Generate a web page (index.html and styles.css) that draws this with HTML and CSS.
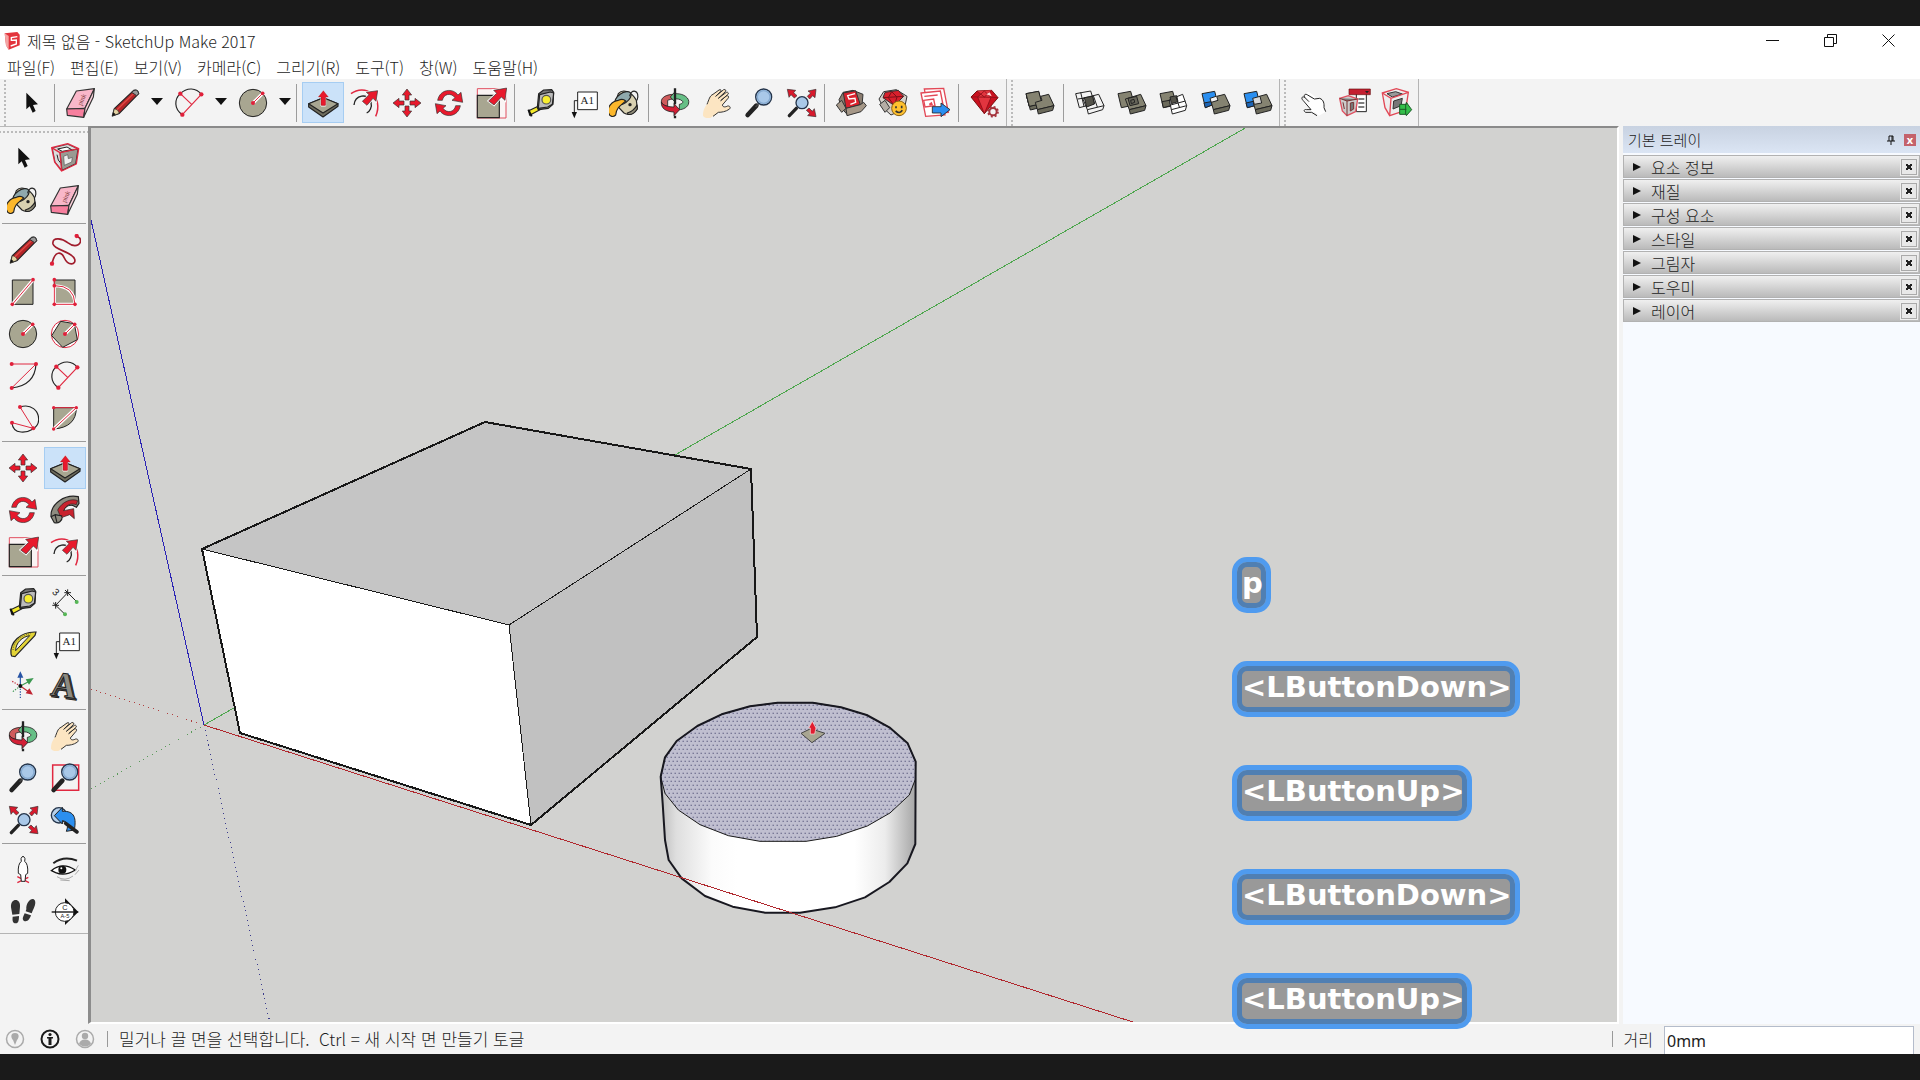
FILE: index.html
```html
<!DOCTYPE html>
<html lang="ko">
<head>
<meta charset="utf-8">
<title>제목 없음 - SketchUp Make 2017</title>
<link rel="stylesheet" href="styles.css">
</head>
<body>
<svg class="sprite" aria-hidden="true">
  <symbol id="select" viewBox="-48 -48 96 96"><path d="M-14-31 21 4 6 6 14 24 5 29-4 10-14 19z" fill="#111"/></symbol>
  <symbol id="component" viewBox="-48 -48 96 96"><g stroke-linejoin="round"><path d="M-38-30 8-41 39-27 32 17-9 37-30 12z" fill="#ddd" stroke="#555" stroke-width="3"/><path d="M-15-17 39-27 32 17-9 37z" fill="#9a9a92" stroke="#333" stroke-width="3"/><path d="M-22-27 6-33 20-25-8-20zM-24-10-20 6-13 15" fill="#fff" stroke="#222" stroke-width="3"/><path d="M-4-5 8-10 10 2 22-2 20 12-2 22z" fill="#eee" stroke="#555" stroke-width="2"/><path d="M-40-31 8-43 41-28 34 18-10 39-31 12zM-40-31-15-16 41-28M-15-16-10 39" fill="none" stroke="#e02840" stroke-width="4"/></g></symbol>
  <symbol id="paint" viewBox="-48 -48 96 96"><g stroke="#222" stroke-width="3.500" stroke-linejoin="round"><path d="M-20-28C-8-42 18-38 34-8L37 16C26 34 10 38-3 30L-30 2z" fill="#d8d0b0"/><path d="M7 30C20 26 30 18 36 6L37 18C28 32 18 36 9 34z" fill="#8f8b78"/><ellipse cx="-6" cy="-14" rx="28" ry="15" transform="rotate(-35 -6 -14)" fill="#8fa9ad"/><path d="M14-20C16-44 48-40 36-8" fill="none"/><path d="M-20-8C-40-6-54 14-50 28-46 44-34 42-28 36-26 14-14 8 2-6-4-12-12-12-20-8z" fill="#fcb72b"/></g><circle cx="15" cy="5" r="5" fill="#222"/></symbol>
  <symbol id="eraser" viewBox="-48 -48 96 96"><g stroke="#333" stroke-width="3.500" stroke-linejoin="round"><path d="M-43 18-14-36 40-43 12 16z" fill="#f9b7c9"/><path d="M-43 18 12 16 8 43-41 37z" fill="#f77f9e"/><path d="M12 16 40-43 37-18 8 43z" fill="#fbd1db"/></g><text x="10" y="5" transform="rotate(-65)" text-anchor="middle" font-family="Liberation Serif,serif" font-size="20" fill="#733">pink</text></symbol>
  <symbol id="pencil" viewBox="-48 -48 96 96"><path d="M-38 39-32 17 26-38Q38-42 41-28L-17 31z" fill="#b32427" stroke="#222" stroke-width="3.500" stroke-linejoin="round"/><path d="M-38 39-32 17Q-20 18-17 31z" fill="#e3d2a2" stroke="#222" stroke-width="2"/><path d="M-38 39-35 28-28 34z" fill="#111"/><path d="M-24 20 30-32" stroke="#e04a45" stroke-width="4"/><path d="M24-36Q38-44 41-28L35-22 20-32z" fill="#999" stroke="#333" stroke-width="3"/></symbol>
  <symbol id="freehand" viewBox="-48 -48 96 96"><path d="M-39 42C-30-2-10 6-2 24 10 50 34 44 29 28 22 4-30 2-36-18-40-42-6-34 8-22 34-2 54-20 44-36L35-42" fill="none" stroke="#a01c2c" stroke-width="5"/><circle cx="-39" cy="41" r="6.500" fill="#e0203a"/><circle cx="35" cy="-42" r="6.500" fill="#e0203a"/></symbol>
  <symbol id="rectangle" viewBox="-48 -48 96 96"><path d="M-32-36H30V37H-32z" fill="#a8a691" stroke="#222" stroke-width="3"/><path d="M-32 37 30-36" stroke="#fff" stroke-width="10"/><path d="M-32 37 30-36" stroke="#e02840" stroke-width="3"/><g fill="#e0203a"><circle cx="-32" cy="37" r="5.500"/><circle cx="30" cy="-37" r="5.500"/></g></symbol>
  <symbol id="rotrect" viewBox="-48 -48 96 96"><path d="M-32-36H30V37H-32z" fill="#a8a691" stroke="#222" stroke-width="3"/><path d="M-32-19Q28-18 30 37H-32z" fill="none" stroke="#fff" stroke-width="9"/><path d="M-32-37V37H30Q28-20-32-19" fill="none" stroke="#e02840" stroke-width="3"/><g fill="#e0203a"><circle cx="-32" cy="-37" r="5.500"/><circle cx="-32" cy="-19" r="5.500"/><circle cx="-32" cy="37" r="5.500"/><circle cx="30" cy="37" r="5.500"/></g></symbol>
  <symbol id="circle" viewBox="-48 -48 96 96"><circle r="41" fill="#a8a691" stroke="#222" stroke-width="3"/><path d="M0 0 29-29" stroke="#fff" stroke-width="10"/><path d="M0 0 29-29" stroke="#e02840" stroke-width="3"/><circle r="6" fill="#e0203a"/><circle cx="29" cy="-29" r="5.500" fill="#e0203a"/></symbol>
  <symbol id="polygon" viewBox="-48 -48 96 96"><circle r="41" fill="#fff" stroke="#e02840" stroke-width="3"/><path d="M-13-38 28-31 37 17-7 40-40 5z" fill="#a8a691" stroke="#222" stroke-width="3"/><path d="M0 0 29-29" stroke="#fff" stroke-width="10"/><path d="M0 0 29-29" stroke="#e02840" stroke-width="3"/><circle r="6" fill="#e0203a"/><circle cx="29" cy="-29" r="5.500" fill="#e0203a"/></symbol>
  <symbol id="arc1" viewBox="-48 -48 96 96"><path d="M39-36Q36 28-34 36" fill="none" stroke="#222" stroke-width="3.500"/><path d="M-34 36 39-36H-34" fill="none" stroke="#e02840" stroke-width="3"/><g fill="#e0203a"><circle cx="-34" cy="36" r="6"/><circle cx="39" cy="-36" r="6"/><circle cx="-34" cy="-36" r="6"/></g></symbol>
  <symbol id="arc2" viewBox="-48 -48 96 96"><path d="M-20 35C-46 18-44-12-26-28-6-48 22-46 37-26" fill="none" stroke="#222" stroke-width="3.500"/><path d="M-20 35 37-26M-26-28 8 4" stroke="#e02840" stroke-width="3.500"/><g fill="#e0203a"><circle cx="-20" cy="35" r="6.500"/><circle cx="37" cy="-26" r="6.500"/><circle cx="-26" cy="-28" r="6.500"/></g></symbol>
  <symbol id="arc3" viewBox="-48 -48 96 96"><path d="M-9-33C24-44 48-22 47 6 46 30 18 44-6 42-24 40-32 28-33 14" fill="none" stroke="#222" stroke-width="3.500"/><path d="M-9-33 31 31-33 14" fill="none" stroke="#e02840" stroke-width="3"/><g fill="#e0203a"><circle cx="-9" cy="-33" r="6"/><circle cx="31" cy="31" r="6"/><circle cx="-33" cy="14" r="6"/></g></symbol>
  <symbol id="pie" viewBox="-48 -48 96 96"><path d="M-34-31H34Q34 28-34 33z" fill="#a8a691" stroke="#222" stroke-width="3"/><path d="M-34 33 34-31" stroke="#fff" stroke-width="10"/><path d="M-34 33 34-31H-34" fill="none" stroke="#e02840" stroke-width="3"/><g fill="#e0203a"><circle cx="-34" cy="33" r="5"/><circle cx="34" cy="-31" r="5"/><circle cx="-34" cy="-31" r="5"/></g></symbol>
  <symbol id="move" viewBox="-48 -48 96 96"><g stroke="#333" stroke-width="2" fill="#e8192c"><path d="M0-42 14-24H6V-9H-6V-24H-14z"/><path d="M0-42 14-24H6V-9H-6V-24H-14z" transform="rotate(90)"/><path d="M0-42 14-24H6V-9H-6V-24H-14z" transform="rotate(180)"/><path d="M0-42 14-24H6V-9H-6V-24H-14z" transform="rotate(270)"/></g></symbol>
  <symbol id="push" viewBox="-48 -48 96 96"><g stroke="#222" stroke-width="3.500" stroke-linejoin="round"><path d="M-43 2 1-16 45 2 45 10 0 42-43 12z" fill="#6f6d5e"/><path d="M-43 2 1-16 45 2 0 30z" fill="#a8a691"/></g><path d="M1-37 16-18H8V9H-6V-18H-14z" fill="#e8192c" stroke="#fff" stroke-width="3"/><path d="M1-37 16-18H8V7H-6V-18H-14z" fill="#e8192c" stroke="#722" stroke-width="1"/></symbol>
  <symbol id="rotate" viewBox="-48 -48 96 96"><g fill="#e8192c" stroke="#333" stroke-width="2"><path d="M-34-8C-28-42 12-46 27-24L36-32 41-2 9-8 18-16C6-32-16-28-20-8z"/><path d="M-34-8C-28-42 12-46 27-24L36-32 41-2 9-8 18-16C6-32-16-28-20-8z" transform="rotate(180)"/></g></symbol>
  <symbol id="follow" viewBox="-48 -48 96 96"><g stroke="#222" stroke-width="3.500" stroke-linejoin="round"><path d="M-42 20C-44-20 0-48 40-40L42-20 34-8 22-14C4-16-8-2-8 18-8 34-20 42-32 38z" fill="#8e8c80"/><path d="M-22 0C-8-26 20-36 38-28L34-16C16-22 2-14-4 2L26-4 28 26 14 14-8 22-16 14z" fill="#c9232e" stroke-width="2"/><path d="M-42 20-30 14-8 18M-30 14-24 38" fill="none"/></g></symbol>
  <symbol id="scale" viewBox="-48 -48 96 96"><path d="M-41-43H45V45H-41z" fill="#faf4f4" stroke="#e05060" stroke-width="3"/><path d="M-41-23H25V44H-41z" fill="#a8a691" stroke="#222" stroke-width="3.500"/><path d="M47-45 42-8 31-18 9 6-7-6 17-29 8-38z" fill="#e8192c" stroke="#fff" stroke-width="7"/><path d="M47-45 42-8 31-18 9 6-7-6 17-29 8-38z" fill="#e8192c" stroke="#333" stroke-width="2"/></symbol>
  <symbol id="offset" viewBox="-48 -48 96 96"><path d="M-42-28C0-60 58-20 32 40" fill="none" stroke="#e02840" stroke-width="4.500"/><path d="M-33 6C-30-24 8-32 18-2 22 12 14 26 5 30" fill="none" stroke="#222" stroke-width="4"/><path d="M38-37 33-5 24-14 6 7-8-5 12-25 4-32z" fill="#e8192c" stroke="#fff" stroke-width="6"/><path d="M38-37 33-5 24-14 6 7-8-5 12-25 4-32z" fill="#e8192c" stroke="#333" stroke-width="2"/></symbol>
  <symbol id="tape" viewBox="-48 -48 96 96"><g stroke="#222" stroke-width="3.500" stroke-linejoin="round"><path d="M-37 23 4 4 8 14-34 37z" fill="#f4ea28"/><path d="M-7-28 8-39 32-40 38-32 36 4 22 16-8 20-11 14z" fill="#777"/><path d="M-4-25 28-33 38-30 34 4 20 12-8 16z" fill="#bbb"/><circle cx="16" cy="-10" r="13" fill="#f8ee30" stroke="#555"/></g><path d="M-38 20-28 40" stroke="#111" stroke-width="6"/></symbol>
  <symbol id="dimension" viewBox="-48 -48 96 96"><g stroke="#222" stroke-width="3"><path d="M-28 10 8-28M-36 2 0 37M0-36 36 0M-28 0V20M-38 10H-18M8-38V-18M-2-28H18"/></g><g fill="#57b757"><circle cx="0" cy="37" r="6"/><circle cx="35" cy="0" r="6"/></g><text x="-36" y="-20" transform="rotate(42 -28 -30)" font-family="Liberation Sans,sans-serif" font-size="30" fill="#222">3</text></symbol>
  <symbol id="protractor" viewBox="-48 -48 96 96"><path d="M-36 30C-40-4-8-38 39-36L36-26-24 38-34 36z" fill="#e2d336" stroke="#222" stroke-width="3.500"/><path d="M-22 20C-22-4-2-22 20-25z" fill="#f3f3f3" stroke="#222" stroke-width="3"/><path d="M-30 18C-28-8-4-28 24-31" fill="none" stroke="#554" stroke-width="3" stroke-dasharray="3 4"/></symbol>
  <symbol id="label" viewBox="-48 -48 96 96"><path d="M-16-33H43V20H-16z" fill="#fff" stroke="#222" stroke-width="3"/><path d="M-16-7H-26V34" fill="none" stroke="#222" stroke-width="3"/><path d="M-34 27H-18L-26 46z" fill="#111"/><text x="13" y="4" text-anchor="middle" font-family="Liberation Serif,serif" font-size="33" fill="#222">A1</text></symbol>
  <symbol id="axes" viewBox="-48 -48 96 96"><g stroke-width="3.500"><path d="M-8 0V-30" stroke="#2754a5"/><path d="M-8 0 22-16" stroke="#3b9850"/><path d="M-8 0 18 18" stroke="#c02432"/><path d="M-8 0V36" stroke="#2754a5" stroke-dasharray="4 4"/><path d="M-8 0-32 18" stroke="#3b9850" stroke-dasharray="4 4"/><path d="M-8 0-36-16" stroke="#c02432" stroke-dasharray="4 4"/></g><path d="M-8-44-17-25H1z" fill="#2754a5"/><path d="M32-24 18-4 8-20z" fill="#3b9850"/><path d="M30 26 8 22 19 7z" fill="#c02432"/><circle cx="-8" r="6" fill="#111"/></symbol>
  <symbol id="text3d" viewBox="-48 -48 96 96"><g font-family="Liberation Serif,serif" font-size="106" font-weight="700" text-anchor="middle" transform="rotate(8)" stroke="#222" stroke-width="3"><text x="2" y="38" fill="#555">A</text><text x="-3" y="33" fill="#8c8b82">A</text></g></symbol>
  <symbol id="orbit" viewBox="-48 -48 96 96"><g stroke="#222" stroke-width="2.500" stroke-linejoin="round"><path d="M-3-26C-24-26-42-18-41-3-38 6-30 8-22 10V-8C-18-10-10-12-3-12z" fill="#cf5b5c"/><path d="M4-28C28-28 44-14 41 0 40 12 24 20 13 20V4C22 2 26-2 22-6 14-12 8-13 0-12L2-1-14-18 0-34z" fill="#66bf86"/><path d="M-41-3C-38 8-18 12-3 12V2L14 20-3 38V27C-28 26-42 16-41-3z" fill="#d21f35"/></g><path d="M0-44V4M0 38V46" stroke="#222" stroke-width="7"/></symbol>
  <symbol id="pan" viewBox="-48 -48 96 96"><g transform="translate(-4)"><path d="M-38 38C-38 20-32 12-26 4-20-10-18-22-8-26L10-39C16-42 18-38 14-34L0-20 24-40C30-42 32-37 29-34L8-14 32-32C38-34 40-28 36-25L15-7 32-21C38-24 41-18 37-14L20 6C22 14 30 12 36 9 44 8 46 16 40 19 30 26 18 28 8 28 0 36-10 40-14 44-24 46-34 46-38 38z" fill="#fce5c2"/><path d="M-26 4C-20-10-18-22-8-26L10-39C16-42 18-38 14-34L0-20 24-40C30-42 32-37 29-34L8-14 32-32C38-34 40-28 36-25L15-7 32-21C38-24 41-18 37-14L20 6C22 14 30 12 36 9 44 8 46 16 40 19 30 26 18 28 8 28L-8 40" fill="none" stroke="#333" stroke-width="3"/></g></symbol>
  <symbol id="zoom" viewBox="-48 -48 96 96"><path d="M-34 36-8 8" stroke="#222" stroke-width="14" stroke-linecap="round"/><path d="M-10 12 0 0" stroke="#444" stroke-width="5"/><circle cx="14" cy="-18" r="24" fill="#a9c8e8" stroke="#24344a" stroke-width="4"/><circle cx="14" cy="-18" r="19" fill="none" stroke="#86aad0" stroke-width="4"/></symbol>
  <symbol id="zoomwin" viewBox="-48 -48 96 96"><path d="M-37-39H41V37H-37z" fill="none" stroke="#e02840" stroke-width="4.500"/><path d="M-34 36-8 8" stroke="#222" stroke-width="14" stroke-linecap="round"/><circle cx="14" cy="-18" r="24" fill="#a9c8e8" stroke="#24344a" stroke-width="4"/><circle cx="14" cy="-18" r="19" fill="none" stroke="#86aad0" stroke-width="4"/></symbol>
  <symbol id="extents" viewBox="-48 -48 96 96"><path d="M-35 38-14 16" stroke="#222" stroke-width="10" stroke-linecap="round"/><circle cx="3" cy="-1" r="18" fill="#a9c8e8" stroke="#24344a" stroke-width="4"/><g fill="#d8192c" stroke="#333" stroke-width="2"><path d="M-41-41-16-38-22-31-12-22-20-15-30-25-36-17z"/><path d="M-41-41-16-38-22-31-12-22-20-15-30-25-36-17z" transform="translate(4)rotate(90)"/><path d="M-41-41-16-38-22-31-12-22-20-15-30-25-36-17z" transform="translate(4)rotate(180)"/></g></symbol>
  <symbol id="previous" viewBox="-48 -48 96 96"><circle cx="-18" cy="-14" r="23" fill="#b6d0ea" stroke="#24344a" stroke-width="4"/><path d="M-32-13-8-38V-26C30-28 34-4 28 30L4 34C12 12 6 4-8 2V12z" fill="#2b8ff0" stroke="#222" stroke-width="3"/><path d="M2 10 36 36" stroke="#222" stroke-width="11" stroke-linecap="round"/></symbol>
  <symbol id="camera" viewBox="-48 -48 96 96"><path d="M-17 38 16 22M-17 20 18 38" stroke="#e02840" stroke-width="4"/><path d="M-6-34Q0-48 6-34L5-26Q16-18 14 10L8 14 6 34H-5L-7 14-14 10Q-16-18-5-26z" fill="#fff" stroke="#222" stroke-width="3"/></symbol>
  <symbol id="look" viewBox="-48 -48 96 96"><path d="M-35-20Q-4-44 36-28" fill="none" stroke="#222" stroke-width="6"/><path d="M-41 2Q-8-26 31 0 0 20-28 8z" fill="#fff" stroke="#111" stroke-width="4"/><circle cx="-8" cy="-1" r="12" fill="#111"/><circle cx="-11" cy="-5" r="3" fill="#fff"/><path d="M-24 20Q0 36 24 18M-14 30 14 32M30 4 40-14M30 14 42 0" stroke="#aaa" stroke-width="3" fill="none"/></symbol>
  <symbol id="walk" viewBox="-48 -48 96 96"><g fill="#333"><path d="M-36-14C-38-44-6-42-9-16L-11 6-32 8z"/><path d="M-31 14-12 12C-12 22-13 34-22 34-32 34-32 24-31 14z"/><path d="M10-8C8-32 30-48 36-34 40-22 30-8 26 4L8-2z"/><path d="M5 4 24 10C20 22 12 32 2 26-4 20 2 12 5 4z"/></g></symbol>
  <symbol id="section" viewBox="-48 -48 96 96"><path d="M0-41 40 0 0 39z" fill="#111"/><circle cx="-1" cy="0" r="28" fill="#fff" stroke="#222" stroke-width="3"/><path d="M-40 0H40" stroke="#111" stroke-width="4"/><g text-anchor="middle" font-family="Liberation Sans,sans-serif" fill="#222"><text x="0" y="-6" font-size="22">C</text><text x="0" y="19" font-size="17">A-5</text></g></symbol>
  <symbol id="warehouse" viewBox="-48 -48 96 96"><g stroke="#333" stroke-width="3" stroke-linejoin="round"><path d="M-36-10-24-32 6-38 36-26 32 18-10 36-28 16z" fill="#8b7d70"/><path d="M-23-30 14-37 28 5-15 16z" fill="#d9202c"/><path d="M-44 6-28-8-15 16-28 28zM-15 16 28 5 38-2 46 8 30 26-12 38z" fill="#a69888"/></g><path d="M12-28-10-22-6-12 12-14 14-2-2 4" fill="none" stroke="#fff" stroke-width="4"/></symbol>
  <symbol id="share" viewBox="-48 -48 96 96"><g stroke="#333" stroke-width="3" stroke-linejoin="round"><path d="M-42-12-28-34 10-40 42-20 34 18-6 36-28 16z" fill="#d6d0c9"/><path d="M-24-32 16-38 32-20 4 8-30-16z" fill="#d9202c"/><path d="M-40 4-24-8-10 14-24 28z" fill="#b5ada5"/></g><path d="M-30-16 32-20M-14-16 4 8 12-18-4-34z" fill="none" stroke="#7d1018" stroke-width="3"/><circle cx="18" cy="16" r="22" fill="#ffc12e" stroke="#8a6010" stroke-width="3"/><path d="M9 10V16M26 8V16M8 24Q20 34 28 22" fill="none" stroke="#333" stroke-width="5"/></symbol>
  <symbol id="layout" viewBox="-48 -48 96 96"><g fill="#fff" stroke="#e24856" stroke-width="4"><path d="M-32-42 26-44 40 28-18 32z"/><path d="M-42-30 16-36 30 36-28 40z"/><path d="M-32-20 8-24M-34-8-4-12 0 8-30 12z"/></g><path d="M-18 2-10-4-6 6-16 8z" fill="#e24856"/><path d="M-8 11H18V0L45 20 18 41V30H-8z" fill="#2b8ff0" stroke="#222" stroke-width="2.500"/></symbol>
  <symbol id="ruby" viewBox="-48 -48 96 96"><path d="M-42-18-24-36 20-38 39-16-2 32z" fill="#c9101e" stroke="#711" stroke-width="3"/><path d="M-24-36-2-18 20-38M-42-18-2-18 39-16M-22-18-2 32 18-17-2-36-22-18" fill="#e2353f" stroke="#8b0e18" stroke-width="2.500"/><path d="M4-26 14-32 20-20z" fill="#ffd8d8"/><circle cx="24" cy="26" r="11" fill="#f3f3f3" stroke="#a4333c" stroke-width="6"/><circle cx="24" cy="26" r="15" fill="none" stroke="#a4333c" stroke-width="5" stroke-dasharray="6 5.800"/></symbol>
  <symbol id="shell" viewBox="-48 -48 96 96"><g stroke="#222" stroke-width="3" stroke-linejoin="round"><path d="M-42-28-4-35 6 2-32 10z" fill="#858371"/><path d="M-32 10-10 5-8 16-29 21-40-20z" fill="#6b6a5b"/><path d="M-42-28-4-35 6 2-32 10z" fill="#858371"/><path d="M-14-2 6-8 2-20 26-26 42 8-8 20z" fill="#858371"/><path d="M-8 20 42 8 38 22-5 33z" fill="#6b6a5b"/></g></symbol>
  <symbol id="intersect" viewBox="-48 -48 96 96"><g fill="none" stroke="#222" stroke-width="3" stroke-linejoin="round"><path d="M-43-28 2-36 14 2-32 14zM-37-12 8-18M-22-14 26-26 42 8-8 20zM-8 20-5 33 38 20 42 8M-28-32-18 10M10-22 22 12"/><path d="M-17-16 8-20 13 3-10 12z" fill="#54534a"/></g></symbol>
  <symbol id="union" viewBox="-48 -48 96 96"><g stroke="#222" stroke-width="3" stroke-linejoin="round"><path d="M-42-28-4-35 8 6-32 14z" fill="#858371"/><path d="M-20-12 26-26 42 8-8 20z" fill="#858371"/><path d="M-8 20 42 8 38 22-5 33z" fill="#6b6a5b"/><path d="M-12-14 14-20 20 2-6 8zM-4-8 6-11 8-2-2 2z" fill="#66655a"/></g></symbol>
  <symbol id="subtract" viewBox="-48 -48 96 96"><g stroke="#222" stroke-width="3" stroke-linejoin="round"><path d="M-42-28-4-35 8 6-32 14z" fill="#858371"/><path d="M-36-4-14-8-10 8-32 14z" fill="#6b6a5b"/><path d="M-14-10 26-26 38 8-8 20zM-8 20-5 33 34 22 38 8" fill="#fff"/><path d="M-12-18 8-22 12-4-8 2z" fill="#54534a"/><path d="M6-18 16 12M-10 6 34-6" fill="none"/></g></symbol>
  <symbol id="trim" viewBox="-48 -48 96 96"><g stroke="#222" stroke-width="3" stroke-linejoin="round"><path d="M-42-28-4-35 0-20-18-14-12 6-32 14z" fill="#2b8ff0"/><path d="M-36 0-15-4-12 6-32 14z" fill="#1c64b5"/><path d="M-14-2 6-8 2-20 26-26 42 8-8 20z" fill="#858371"/><path d="M-8 20 42 8 38 22-5 33z" fill="#6b6a5b"/></g></symbol>
  <symbol id="split" viewBox="-48 -48 96 96"><g stroke="#222" stroke-width="3" stroke-linejoin="round"><path d="M-42-28-4-35 6 4-32 14z" fill="#2b8ff0"/><path d="M-36 0-14-5-10 8-32 14z" fill="#1c64b5"/><path d="M-14 0 4-20 26-26 42 8-8 20z" fill="#858371"/><path d="M-8 20 42 8 38 22-5 33z" fill="#6b6a5b"/><path d="M-16-14 6-20 11 0-11 4z" fill="#d9d9d9"/></g></symbol>
  <symbol id="interact" viewBox="-48 -48 96 96"><path d="M-22-18C-26-26-18-28-12-22L2-8-18-28C-20-34-12-34-8-30L14-12 20-14C32-10 34 2 33 14L38 26 18 38 6 28-20 28C-28 26-28 20-20 20L-6 20-28-2C-34-8-28-12-22-6L-10 4z" fill="#fff"/><path d="M-22 28C-30 24-26 18-20 20L-6 20-30-8C-38-16-30-22-24-16L-12-4M-24-16C-30-26-22-28-16-24L4-12 20-14C32-10 34 2 33 14L38 26M-22 28-4 28 12 38" fill="none" stroke="#222" stroke-width="3" stroke-linejoin="round"/></symbol>
  <symbol id="options" viewBox="-48 -48 96 96"><path d="M4-34H34V26H4z" fill="#fff" stroke="#222" stroke-width="3"/><path d="M10-12H28M10 0H28M10 12H28" stroke="#555" stroke-width="4"/><path d="M-18-42H46V-25H-18z" fill="#c41f30" stroke="#611" stroke-width="2"/><path d="M30-36H42L36-29z" fill="#222"/><path d="M-46-14-20-22 8-12 2 26-24 38-38 24z" fill="#ccc" stroke="#e05060" stroke-width="4"/><path d="M-46-14-24-6 8-12M-24-6V38M-36-2-32 18M-14 0V24L-4 18V-2z" fill="#777" stroke="#733" stroke-width="3"/></symbol>
  <symbol id="attributes" viewBox="-48 -48 96 96"><path d="M-44-30-2-43 34-32 26 22-22 38-36 14z" fill="#eee" stroke="#e24856" stroke-width="4"/><path d="M-30-28-4-34 16-27-14-18z" fill="#999" stroke="#333" stroke-width="3"/><path d="M-44-30-18-14 34-32M-18-14-22 38" fill="none" stroke="#e24856" stroke-width="4"/><path d="M-10-6 16-14 12 8-12 18z" fill="#777" stroke="#333" stroke-width="3"/><path d="M8 4H28V-2L44 20 28 38V34H8z" fill="#34bf4a" stroke="#1b5c27" stroke-width="3"/><path d="M8 19H28M26 2V34" stroke="#1b5c27" stroke-width="3"/></symbol>
</svg>

<div class="window">
  <header class="titlebar">
    <svg class="logo" viewBox="0 0 48 54"><path d="M2 4 40 0 47 8V40L14 53 6 40z" fill="#e3343c"/><path d="M2 4 14 12V53L6 40z" fill="#f3a5a4"/><path d="M40 14 22 17V25L37 24V36L20 42" fill="none" stroke="#fff" stroke-width="4"/></svg>
    <h1>제목 없음 - SketchUp Make 2017</h1>
    <div class="winbtns">
      <button aria-label="최소화"><svg viewBox="0 0 13 13"><path d="M0 6.500H13"/></svg></button>
      <button aria-label="이전 크기로"><svg viewBox="0 0 13 13"><path d="M.5 3.500H9.500V12.500H.5zM3.500 3.500V.5H12.500V9.500H9.500"/></svg></button>
      <button aria-label="닫기"><svg viewBox="0 0 13 13"><path d="M.5.5 12.500 12.500M12.500.5.5 12.500"/></svg></button>
    </div>
  </header>
  <nav class="menubar">
    <button>파일(F)</button><button>편집(E)</button><button>보기(V)</button><button>카메라(C)</button><button>그리기(R)</button><button>도구(T)</button><button>창(W)</button><button>도움말(H)</button>
  </nav>
  <div class="toolbars">
    <div class="bar" role="toolbar" aria-label="시작하기">
      <button class="tool" aria-label="선택"><svg><use href="#select"/></svg></button>
      <span class="vsep"></span>
      <button class="tool" aria-label="지우개"><svg><use href="#eraser"/></svg></button>
      <button class="tool wide" aria-label="선"><svg><use href="#pencil"/></svg></button><button class="drop" aria-label="선 도구 목록"></button>
      <button class="tool wide" aria-label="호"><svg><use href="#arc2"/></svg></button><button class="drop" aria-label="호 도구 목록"></button>
      <button class="tool wide" aria-label="원"><svg><use href="#circle"/></svg></button><button class="drop" aria-label="도형 도구 목록"></button>
      <span class="vsep"></span>
      <button class="tool active" aria-label="밀기/끌기"><svg><use href="#push"/></svg></button>
      <button class="tool" aria-label="오프셋"><svg><use href="#offset"/></svg></button>
      <button class="tool" aria-label="이동"><svg><use href="#move"/></svg></button>
      <button class="tool" aria-label="회전"><svg><use href="#rotate"/></svg></button>
      <button class="tool" aria-label="배율"><svg><use href="#scale"/></svg></button>
      <span class="vsep"></span>
      <button class="tool" aria-label="줄자"><svg><use href="#tape"/></svg></button>
      <button class="tool" aria-label="텍스트"><svg><use href="#label"/></svg></button>
      <button class="tool" aria-label="페인트통"><svg><use href="#paint"/></svg></button>
      <span class="vsep"></span>
      <button class="tool" aria-label="궤도"><svg><use href="#orbit"/></svg></button>
      <button class="tool" aria-label="이동 보기"><svg><use href="#pan"/></svg></button>
      <button class="tool" aria-label="확대/축소"><svg><use href="#zoom"/></svg></button>
      <button class="tool" aria-label="범위 확대/축소"><svg><use href="#extents"/></svg></button>
      <span class="vsep"></span>
      <button class="tool" aria-label="3D Warehouse"><svg><use href="#warehouse"/></svg></button>
      <button class="tool" aria-label="모델 공유"><svg><use href="#share"/></svg></button>
      <button class="tool" aria-label="LayOut으로 보내기"><svg><use href="#layout"/></svg></button>
      <span class="vsep"></span>
      <button class="tool" aria-label="확장 프로그램"><svg><use href="#ruby"/></svg></button>
    </div>
    <div class="bar" role="toolbar" aria-label="솔리드 도구">
      <button class="tool" aria-label="외부 셸"><svg><use href="#shell"/></svg></button>
      <span class="vsep"></span>
      <button class="tool" aria-label="교차"><svg><use href="#intersect"/></svg></button>
      <button class="tool" aria-label="결합"><svg><use href="#union"/></svg></button>
      <button class="tool" aria-label="빼기"><svg><use href="#subtract"/></svg></button>
      <button class="tool" aria-label="트림"><svg><use href="#trim"/></svg></button>
      <button class="tool" aria-label="분할"><svg><use href="#split"/></svg></button>
    </div>
    <div class="bar" role="toolbar" aria-label="동적 구성 요소">
      <button class="tool" aria-label="상호 작용"><svg><use href="#interact"/></svg></button>
      <button class="tool" aria-label="구성 요소 옵션"><svg><use href="#options"/></svg></button>
      <button class="tool" aria-label="구성 요소 속성"><svg><use href="#attributes"/></svg></button>
    </div>
  </div>

  <main class="work">
    <aside class="side">
      <div class="palette" role="toolbar" aria-label="큰 도구 세트">
        <div class="set">
          <button class="tool" aria-label="선택"><svg><use href="#select"/></svg></button>
          <button class="tool" aria-label="구성 요소 만들기"><svg><use href="#component"/></svg></button>
          <button class="tool" aria-label="페인트통"><svg><use href="#paint"/></svg></button>
          <button class="tool" aria-label="지우개"><svg><use href="#eraser"/></svg></button>
        </div>
        <div class="set">
          <button class="tool" aria-label="선"><svg><use href="#pencil"/></svg></button>
          <button class="tool" aria-label="자유곡선"><svg><use href="#freehand"/></svg></button>
          <button class="tool" aria-label="직사각형"><svg><use href="#rectangle"/></svg></button>
          <button class="tool" aria-label="회전된 직사각형"><svg><use href="#rotrect"/></svg></button>
          <button class="tool" aria-label="원"><svg><use href="#circle"/></svg></button>
          <button class="tool" aria-label="다각형"><svg><use href="#polygon"/></svg></button>
          <button class="tool" aria-label="호"><svg><use href="#arc1"/></svg></button>
          <button class="tool" aria-label="2점 호"><svg><use href="#arc2"/></svg></button>
          <button class="tool" aria-label="3점 호"><svg><use href="#arc3"/></svg></button>
          <button class="tool" aria-label="파이"><svg><use href="#pie"/></svg></button>
        </div>
        <div class="set">
          <button class="tool" aria-label="이동"><svg><use href="#move"/></svg></button>
          <button class="tool active" aria-label="밀기/끌기"><svg><use href="#push"/></svg></button>
          <button class="tool" aria-label="회전"><svg><use href="#rotate"/></svg></button>
          <button class="tool" aria-label="따라가기"><svg><use href="#follow"/></svg></button>
          <button class="tool" aria-label="배율"><svg><use href="#scale"/></svg></button>
          <button class="tool" aria-label="오프셋"><svg><use href="#offset"/></svg></button>
        </div>
        <div class="set">
          <button class="tool" aria-label="줄자"><svg><use href="#tape"/></svg></button>
          <button class="tool" aria-label="치수"><svg><use href="#dimension"/></svg></button>
          <button class="tool" aria-label="각도기"><svg><use href="#protractor"/></svg></button>
          <button class="tool" aria-label="텍스트"><svg><use href="#label"/></svg></button>
          <button class="tool" aria-label="축"><svg><use href="#axes"/></svg></button>
          <button class="tool" aria-label="3D 텍스트"><svg><use href="#text3d"/></svg></button>
        </div>
        <div class="set">
          <button class="tool" aria-label="궤도"><svg><use href="#orbit"/></svg></button>
          <button class="tool" aria-label="이동 보기"><svg><use href="#pan"/></svg></button>
          <button class="tool" aria-label="확대/축소"><svg><use href="#zoom"/></svg></button>
          <button class="tool" aria-label="창 확대/축소"><svg><use href="#zoomwin"/></svg></button>
          <button class="tool" aria-label="범위 확대/축소"><svg><use href="#extents"/></svg></button>
          <button class="tool" aria-label="이전"><svg><use href="#previous"/></svg></button>
        </div>
        <div class="set">
          <button class="tool" aria-label="카메라 배치"><svg><use href="#camera"/></svg></button>
          <button class="tool" aria-label="둘러보기"><svg><use href="#look"/></svg></button>
          <button class="tool" aria-label="걷기"><svg><use href="#walk"/></svg></button>
          <button class="tool" aria-label="단면"><svg><use href="#section"/></svg></button>
        </div>
      </div>
    </aside>

    <section class="viewport" aria-label="모델">
      <svg class="scene" viewBox="91 128 1526 895" preserveAspectRatio="xMinYMin slice">
        <defs>
          <linearGradient id="wall"><stop offset="0" stop-color="#bdbdbd"/><stop offset=".06" stop-color="#dedede"/><stop offset=".2" stop-color="#fbfbfb"/><stop offset=".3" stop-color="#fff"/><stop offset=".76" stop-color="#fff"/><stop offset=".88" stop-color="#ececec"/><stop offset="1" stop-color="#a6a6a6"/></linearGradient>
          <pattern id="dots" width="12" height="24" patternUnits="userSpaceOnUse"><path d="M0 0H12V24H0z" fill="#c0bfd0"/><path d="M2 2H5V5H2zM8 14H11V17H8z" fill="#33335f"/></pattern>
        </defs>
        <g fill="none" stroke-width="1" shape-rendering="crispEdges">
          <path d="M204 725 1247 127" stroke="#4da64d"/>
          <path d="M91 220 204 725" stroke="#2a22b4"/>
          <path d="M91 689 204 725" stroke="#b04040" stroke-dasharray="1 4"/>
          <path d="M91 789 204 725" stroke="#5a9a5a" stroke-dasharray="1 4"/>
          <path d="M204 725 270 1023" stroke="#3a3a8c" stroke-dasharray="1 4"/>
        </g>
        <path d="M202 549 485 422 751 469 509 625z" fill="#c5c5c5"/>
        <path d="M509 625 751 469 757 637 531 825z" fill="#c1c1c1"/>
        <path d="M202 549 509 625 531 825 240 733z" fill="#fff"/>
        <path d="M202 549 509 625 751 469M509 625 531 825" fill="none" stroke="#1a1a1a" stroke-width="1" shape-rendering="crispEdges"/>
        <path d="M202 549 485 422 751 469 757 637 531 825 240 733z" fill="none" stroke="#181818" stroke-width="2" stroke-linejoin="round" shape-rendering="crispEdges"/>
        <g transform="translate(640 680) scale(.33333)" stroke-linejoin="round">
          <path d="M62 290 68 370 75 480 86 540 125 595 195 648 278 680 375 698 480 698 585 682 675 652 748 606 802 550 826 492 827 245z" fill="url(#wall)"/>
          <path d="M62 290 75 232 110 183 172 138 245 103 330 79 413 68 518 68 603 82 680 105 748 142 803 190 827 245 826 298 808 345 750 399 682 438 590 469 498 484 360 484 265 467 180 434 115 390 75 340z" fill="url(#dots)" stroke="#1a1a1a" stroke-width="3"/>
          <path d="M62 290 75 232 110 183 172 138 245 103 330 79 413 68 518 68 603 82 680 105 748 142 803 190 827 245 826 492 802 550 748 606 675 652 585 682 480 698 375 698 278 680 195 648 125 595 86 540 75 480 68 370z" fill="none" stroke="#181820" stroke-width="6"/>
          <path d="M483 160 512 146 555 160 516 188z" fill="#a8a691" stroke="#444" stroke-width="3"/>
          <path d="M517 124 528 144 524 162H511V144H506z" fill="#e01c30" stroke="#fdd" stroke-width="2"/>
        </g>
        <path d="M204 725 1136 1023" stroke="#b0282e" fill="none" stroke-width="1" shape-rendering="crispEdges"/>
      </svg>
      <div class="keys">
        <kbd>p</kbd><kbd>&lt;LButtonDown&gt;</kbd><kbd>&lt;LButtonUp&gt;</kbd><kbd>&lt;LButtonDown&gt;</kbd><kbd>&lt;LButtonUp&gt;</kbd>
      </div>
    </section>

    <aside class="tray">
      <header class="trayhead">
        <h2>기본 트레이</h2>
        <button class="pin" aria-label="자동 숨기기"><svg viewBox="0 0 8 10"><path d="M2 6V1H6V6M0 6H8M4 6V10M5 1V6"/></svg></button>
        <button class="close" aria-label="트레이 닫기">x</button>
      </header>
      <div class="panels">
        <div class="panel"><button class="toggle">요소 정보</button><button class="x" aria-label="요소 정보 닫기"></button></div>
        <div class="panel"><button class="toggle">재질</button><button class="x" aria-label="재질 닫기"></button></div>
        <div class="panel"><button class="toggle">구성 요소</button><button class="x" aria-label="구성 요소 닫기"></button></div>
        <div class="panel"><button class="toggle">스타일</button><button class="x" aria-label="스타일 닫기"></button></div>
        <div class="panel"><button class="toggle">그림자</button><button class="x" aria-label="그림자 닫기"></button></div>
        <div class="panel"><button class="toggle">도우미</button><button class="x" aria-label="도우미 닫기"></button></div>
        <div class="panel"><button class="toggle">레이어</button><button class="x" aria-label="레이어 닫기"></button></div>
      </div>
    </aside>
  </main>

  <footer class="status">
    <button aria-label="위치"><svg viewBox="0 0 20 20"><circle cx="10" cy="10" r="8.500" fill="none" stroke="#aaa" stroke-width="1.500"/><path d="M10 4C5 4 6 9 8 11L10 16 12 11C14 9 15 4 10 4z" fill="#aaa"/></svg></button>
    <button aria-label="크레딧"><svg viewBox="0 0 20 20"><circle cx="10" cy="10" r="8.500" fill="none" stroke="#1a1a1a" stroke-width="2"/><circle cx="10" cy="5.500" r="1.600" fill="#1a1a1a"/><path d="M7 8H13V9.500H11.500V16H8.500V9.500H7z" fill="#1a1a1a"/></svg></button>
    <button aria-label="로그인"><svg viewBox="0 0 20 20"><circle cx="10" cy="10" r="8.500" fill="none" stroke="#aaa" stroke-width="1.500"/><circle cx="10" cy="7" r="3.200" fill="#aaa"/><path d="M4 15Q5 10.500 10 10.500T16 15Q10 20 4 15z" fill="#aaa"/></svg></button>
    <p>밀거나 끌 면을 선택합니다.&nbsp; Ctrl = 새 시작 면 만들기 토글</p>
    <label for="measure">거리</label>
    <input id="measure" type="text" value="0mm">
  </footer>
</div>
</body>
</html>
```
FILE: styles.css
```css
* { box-sizing: border-box; }

body {
  margin: 0;
  padding: 26px 0;
  height: 100vh;
  background: #1a1a1a;
  color: #1c1c1c;
  font: 300 16px/20px "Noto Sans CJK KR", "Noto Sans", sans-serif;
}

button {
  margin: 0;
  padding: 0;
  border: 0;
  background: none;
  color: inherit;
  font: inherit;
}

.sprite { display: none; }

.window {
  display: flex;
  flex-direction: column;
  height: 100%;
  background: #f3f3f3;
}

/* title and menu */
.titlebar {
  display: flex;
  align-items: center;
  height: 29px;
  padding: 0 3px 0 4px;
  background: #fff;
}
.logo { width: 16px; height: 18px; }
h1 {
  flex: 1;
  margin: 0 0 0 7px;
  font-size: 16px;
  font-weight: 300;
}
.winbtns { display: flex; }
.winbtns button { width: 58px; height: 28px; }
.winbtns svg {
  display: block;
  width: 13px;
  height: 13px;
  margin: 0 auto;
  fill: none;
  stroke: #111;
}
.menubar {
  display: flex;
  gap: 15px;
  height: 24px;
  padding: 2px 7px;
  background: #fff;
}

/* tool strips */
.toolbars {
  display: flex;
  height: 47px;
}
.bar {
  display: flex;
  align-items: center;
  padding: 1px 0 1px 12px;
  border-right: 1px solid #b4b4b4;
  background: linear-gradient(#bbb 2px, transparent 2px) 4px 5px / 2px 4px repeat-y;
}
.bar:first-child { padding-left: 10px; }
.tool {
  flex: none;
  width: 42px;
  height: 41px;
  border: 1px solid transparent;
}
.tool svg {
  display: block;
  width: 32px;
  height: 32px;
  margin: 0 auto;
}
.tool.wide { width: 45px; }
.tool.active { border-color: #a6cdf2; background: #cbe2f9; }
.drop { display: flex; justify-content: center; width: 19px; height: 41px; padding-top: 16px; }
.drop::before {
  content: "";
  border: 6px solid transparent;
  border-top: 7px solid #111;
  border-bottom: 0;
}
.vsep { width: 1px; height: 38px; margin: 0 5px 0 2px; background: #9c9c9c; }

/* work area */
.work { display: flex; flex: 1; min-height: 0; }
.side { width: 88px; }
.palette {
  padding: 10px 2px 0;
  border-top: 1px solid #b9b9b9;
  border-bottom: 1px solid #b4b4b4;
  background: linear-gradient(90deg, #bbb 2px, transparent 2px) 3px 4px / 4px 2px repeat-x;
}
.set { display: flex; flex-wrap: wrap; }
.set .tool { height: 42px; }
.set + .set { margin-top: 2px; padding-top: 5px; border-top: 1px solid #9c9c9c; }

.viewport {
  position: relative;
  flex: 1;
  min-width: 0;
  border: 2px solid #fff;
  border-top-color: #8a8a8a;
  border-left: 3px solid #8c8c8c;
  background: #d2d2d0;
}
.scene { display: block; width: 100%; height: 100%; }
.keys {
  position: absolute;
  top: 429px;
  left: 1141px;
  display: flex;
  flex-direction: column;
  align-items: flex-start;
  gap: 48px;
}
kbd {
  height: 56px;
  padding: 0 3px 0 5px;
  border: 5px solid #4f9bef;
  border-radius: 15px;
  background: #999;
  box-shadow: inset 0 0 0 5px #507fb2;
  color: #fff;
  font: 700 29px/42px "DejaVu Sans", sans-serif;
}

/* tray */
.tray {
  display: flex;
  flex-direction: column;
  width: 299px;
  margin-left: 2px;
  padding-left: 2px;
}
.trayhead {
  display: flex;
  align-items: center;
  height: 27px;
  padding: 0 4px 0 5px;
  background: linear-gradient(#c8d2e1, #dbe5f4);
}
h2 { flex: 1; margin: 0; font-size: 15px; font-weight: 300; }
.pin svg { display: block; width: 8px; height: 10px; fill: none; stroke: #111; }
.close {
  width: 12px;
  height: 12px;
  margin-left: 9px;
  background: #c4626b;
  color: #fff;
  font: 700 11px/10px "Noto Sans", sans-serif;
}
.panels {
  display: flex;
  flex: 1;
  flex-direction: column;
  gap: 1px;
  padding-top: 2px;
  background: #f7faff;
}
.panel {
  display: flex;
  align-items: center;
  height: 23px;
  padding: 0 2px 0 9px;
  border: 1px solid #b2b2b2;
  background: linear-gradient(#f0f0f0, #bababa);
}
.toggle { display: flex; flex: 1; align-items: center; gap: 10px; text-align: left; }
.toggle::before {
  content: "";
  border: 4px solid transparent;
  border-left: 8px solid #111;
  border-right: 0;
}
.x {
  width: 16px;
  height: 16px;
  border: 1px solid #aaa;
  outline: 1px solid #eee;
  background:
    linear-gradient(45deg, transparent 40%, #222 40%, #222 60%, transparent 60%) center / 6px 6px no-repeat,
    linear-gradient(-45deg, transparent 40%, #222 40%, #222 60%, transparent 60%) center / 6px 6px no-repeat,
    #e8e8e8;
}

/* status */
.status {
  display: flex;
  align-items: center;
  gap: 15px;
  height: 30px;
  padding: 0 6px 0 5px;
}
.status svg { display: block; width: 20px; height: 20px; }
.status p {
  flex: 1;
  margin: 0 0 0 -3px;
  padding-left: 11px;
  border-left: 1px solid #999;
  font-size: 17px;
  line-height: 16px;
}
.status label { padding-left: 11px; border-left: 1px solid #999; line-height: 16px; }
.status input {
  align-self: flex-end;
  width: 250px;
  height: 28px;
  margin-left: -4px;
  padding: 2px;
  border: 1px solid #b4bccb;
  border-bottom: 0;
  background: #fff;
  color: inherit;
  font: 400 16px/20px "Noto Sans", sans-serif;
}
```
